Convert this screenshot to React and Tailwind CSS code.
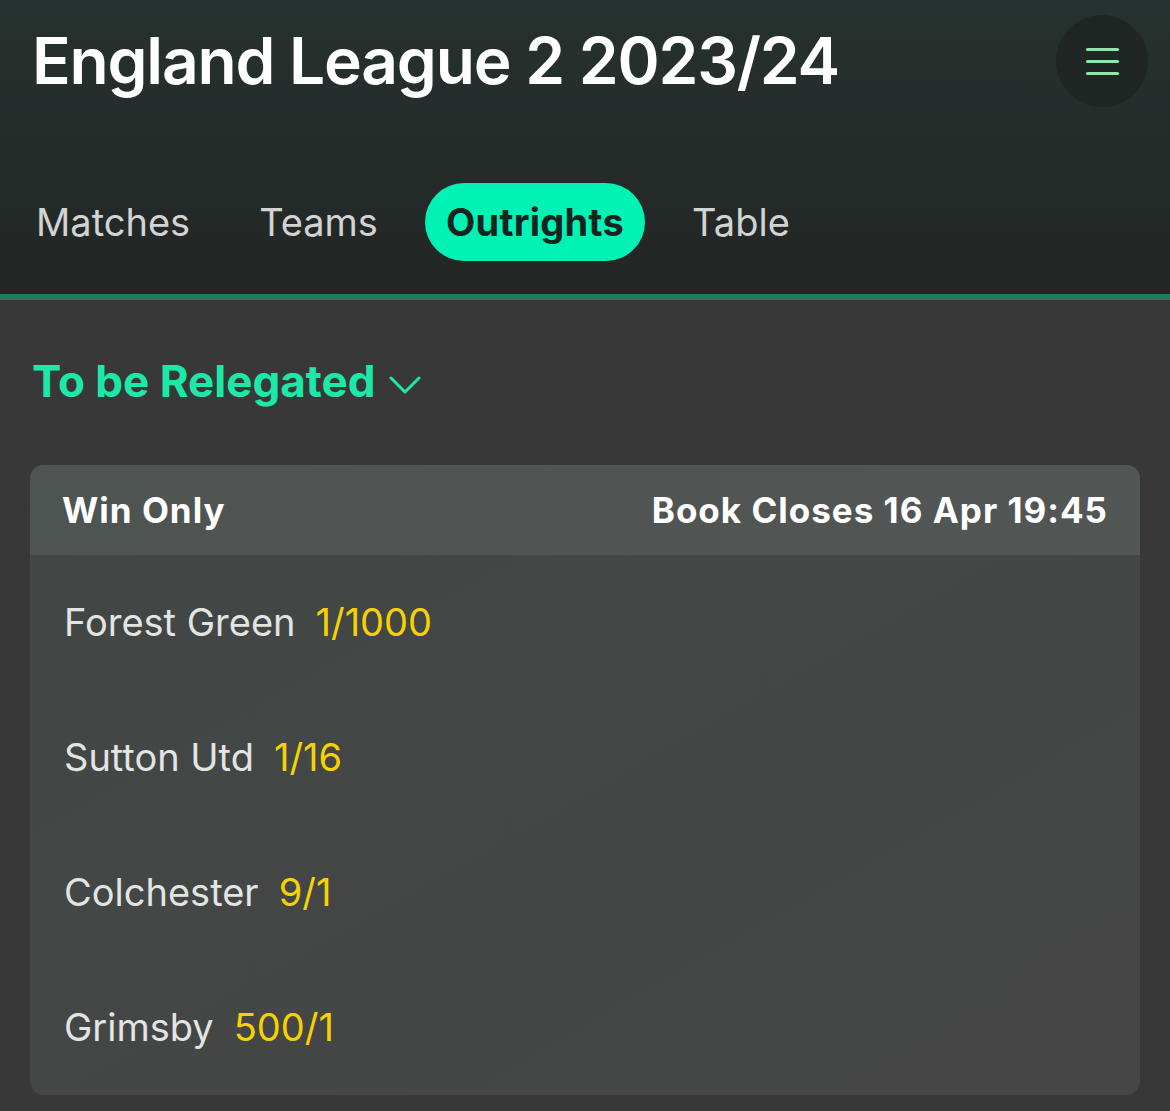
const rows = [
  { team: "Forest Green", odds: "1/1000" },
  { team: "Sutton Utd", odds: "1/16" },
  { team: "Colchester", odds: "9/1" },
  { team: "Grimsby", odds: "500/1" },
];

const App = () => {
  return (
    <div
      className="w-[1170px] h-[1111px] bg-[#383838] overflow-hidden"
      style={{ fontFamily: "Inter, 'Noto Sans', sans-serif" }}
    >
      {/* header */}
      <div className="bg-gradient-to-b from-[#26322f] to-[#222625] border-b-[6px] border-[#1f7a5e]">
        <div className="flex justify-between items-start pl-[32px] pr-[22px] pt-[15px]">
          <h1 className="text-[64px] leading-[92px] font-semibold text-white tracking-[-1.2px]">
            England League 2 2023/24
          </h1>
          <button className="w-[92px] h-[92px] rounded-full bg-[#1f2624] flex flex-col items-center justify-center gap-[9px]">
            <span className="block w-[33px] h-[3px] bg-[#8fe8ab] rounded-full"></span>
            <span className="block w-[33px] h-[3px] bg-[#8fe8ab] rounded-full"></span>
            <span className="block w-[33px] h-[3px] bg-[#8fe8ab] rounded-full"></span>
          </button>
        </div>

        {/* tabs */}
        <div className="flex items-center pl-[36px] mt-[76px] pb-[33px] text-[38px]">
          <div className="h-[78px] flex items-center text-[#d2d4d3]">Matches</div>
          <div className="h-[78px] flex items-center text-[#d2d4d3] ml-[69px]">Teams</div>
          <div className="h-[78px] px-[21px] rounded-full bg-[#00f3b4] text-[#15241f] font-bold flex items-center ml-[47px] tracking-[0.3px]">
            Outrights
          </div>
          <div className="h-[78px] flex items-center text-[#d2d4d3] ml-[47px]">Table</div>
        </div>
      </div>

      {/* market select */}
      <div className="flex items-center pl-[32px] pt-[54px] pb-[57px] gap-[14px]">
        <span className="text-[44px] leading-[54px] font-bold text-[#1ce8a8]">To be Relegated</span>
        <svg width="32" height="20" viewBox="0 0 32 20" fill="none" className="mt-[8px]">
          <path d="M2 3 L16 17 L30 3" stroke="#1ce8a8" strokeWidth="3" strokeLinecap="round" strokeLinejoin="round" />
        </svg>
      </div>

      {/* card */}
      <div className="mx-[30px] rounded-[14px] overflow-hidden bg-gradient-to-br from-[#414745] to-[#464646]">
        <div className="h-[90px] flex items-center justify-between px-[32px] bg-gradient-to-r from-[#4e5452] to-[#525655] text-[35px] font-bold text-white tracking-[1px]">
          <span>Win Only</span>
          <span>Book Closes 16 Apr 19:45</span>
        </div>
        <div>
          {rows.map((r) => (
            <div key={r.team} className="h-[135px] flex items-center pl-[34px] gap-[20px] text-[38px]">
              <span className="text-[#e3e4e4]">{r.team}</span>
              <span className="text-[#f6d200]">{r.odds}</span>
            </div>
          ))}
        </div>
      </div>
    </div>
  );
};

export default App;
